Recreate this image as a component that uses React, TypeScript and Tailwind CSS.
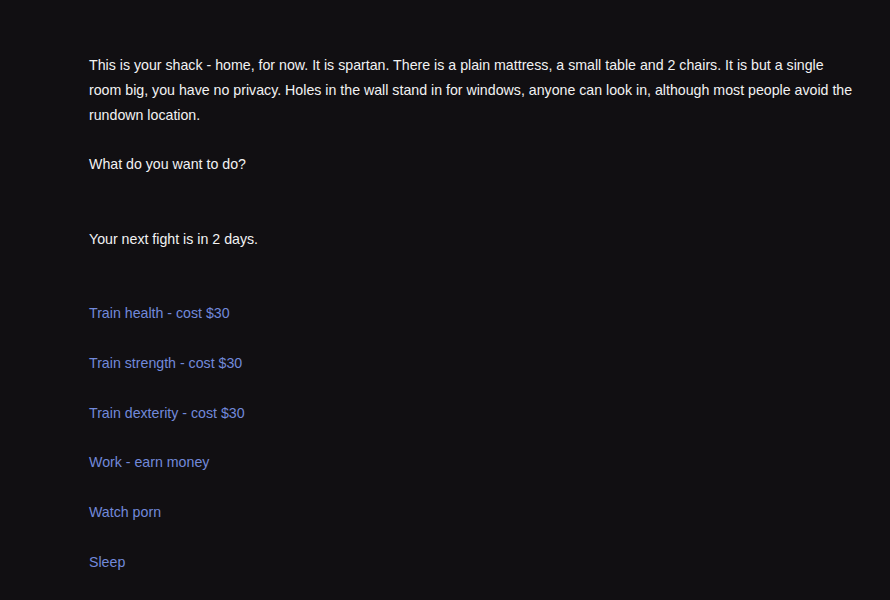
import React from 'react'

const actions = [
  'Train health - cost $30',
  'Train strength - cost $30',
  'Train dexterity - cost $30',
  'Work - earn money',
  'Watch porn',
  'Sleep',
]

export default function App() {
  return (
    <div className="min-h-screen bg-[#110f12] text-[#f2f2f2] font-['Liberation_Sans',Arial,sans-serif] text-[14.2px] leading-[25px]">
      <div className="pl-[89px] pr-[35px] pt-[53px] pb-6">
        <p>
          This is your shack - home, for now. It is spartan. There is a plain mattress, a small table and 2 chairs. It is but a single room big, you have no privacy. Holes in the wall stand in for windows, anyone can look in, although most people avoid the rundown location.
        </p>
        <p className="mt-6">What do you want to do?</p>
        <p className="mt-[50px]">Your next fight is in 2 days.</p>
        <div className="mt-[49px] flex flex-col gap-[24.8px]">
          {actions.map((a) => (
            <a key={a} href="#" className="text-[#7289da] self-start">
              {a}
            </a>
          ))}
        </div>
      </div>
    </div>
  )
}
